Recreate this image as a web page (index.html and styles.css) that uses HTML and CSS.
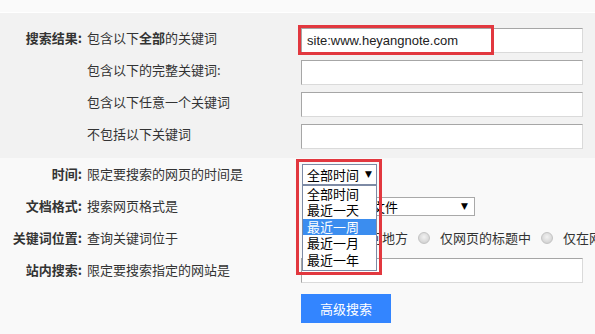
FILE: index.html
```html
<!DOCTYPE html>
<html lang="zh-CN">
<head>
<meta charset="utf-8">
<link rel="stylesheet" href="styles.css">
</head>
<body>
<div class="topbar"></div>
<section class="group group-words">
  <div class="row">
    <div class="label">搜索结果:</div>
    <div class="desc">包含以下<b>全部</b>的关键词</div>
    <div class="control"><div class="input">site:www.heyangnote.com</div></div>
  </div>
  <div class="row">
    <div class="label"></div>
    <div class="desc">包含以下的完整关键词:</div>
    <div class="control"><div class="input"></div></div>
  </div>
  <div class="row">
    <div class="label"></div>
    <div class="desc">包含以下任意一个关键词</div>
    <div class="control"><div class="input"></div></div>
  </div>
  <div class="row">
    <div class="label"></div>
    <div class="desc">不包括以下关键词</div>
    <div class="control"><div class="input"></div></div>
  </div>
</section>
<section class="group group-filters">
  <div class="row">
    <div class="label">时间:</div>
    <div class="desc">限定要搜索的网页的时间是</div>
    <div class="control">
      <div class="select select-time">
        <span>全部时间</span><span class="arrow">▼</span>
        <ul class="dropdown">
          <li>全部时间</li>
          <li>最近一天</li>
          <li class="active">最近一周</li>
          <li>最近一月</li>
          <li>最近一年</li>
        </ul>
      </div>
    </div>
  </div>
  <div class="row">
    <div class="label">文档格式:</div>
    <div class="desc">搜索网页格式是</div>
    <div class="control">
      <div class="select select-format"><span>所有网页和文件</span><span class="arrow">▼</span></div>
    </div>
  </div>
  <div class="row">
    <div class="label">关键词位置:</div>
    <div class="desc">查询关键词位于</div>
    <div class="control radios">
      <label class="radio first"><span class="dot"></span>网页的任何地方</label>
      <label class="radio"><span class="dot"></span>仅网页的标题中</label>
      <label class="radio"><span class="dot"></span>仅在网页的URL中</label>
    </div>
  </div>
  <div class="row">
    <div class="label">站内搜索:</div>
    <div class="desc">限定要搜索指定的网站是</div>
    <div class="control"><div class="input"></div></div>
  </div>
  <div class="actions">
    <button class="btn">高级搜索</button>
  </div>
</section>
<div class="mark mark-input"></div>
<div class="mark mark-time"></div>
</body>
</html>
```

FILE: styles.css
```css
* { box-sizing: border-box; }
html, body {
  margin: 0;
  padding: 0;
  width: 595px;
  height: 334px;
  overflow: hidden;
  background: #f9f9f9;
  font-family: "Liberation Sans", "Noto Sans CJK SC", sans-serif;
  font-size: 13px;
  color: #333;
}
.topbar {
  height: 13px;
  background: #fafafa;
  border-bottom: 1px solid #ffffff;
}
.group-words {
  background: #f2f2f2;
  padding: 11px 0 6px;
}
.group-filters {
  background: #f9f9f9;
  padding: 0;
}
.row {
  display: grid;
  grid-template-columns: 82px 209px 282px;
  column-gap: 5px;
  height: 32px;
  align-items: center;
  white-space: nowrap;
}
.control {
  min-width: 0;
  overflow: visible;
}
.group-words .label,
.group-words .desc {
  padding-bottom: 4px;
}
.label {
  text-align: right;
  font-weight: bold;
  font-family: "Noto Sans CJK SC", sans-serif;
  line-height: 16px;
}
.desc {
  font-family: "Noto Sans CJK SC", sans-serif;
  line-height: 16px;
}
.desc b { font-weight: bold; }
.input {
  height: 25px;
  width: 282px;
  background: #fff;
  border: 1px solid;
  border-color: #a6a6a6 #dadada #dadada #a6a6a6;
  padding: 0 5px;
  line-height: 23px;
  font-size: 13px;
  color: #222;
  font-family: "Liberation Sans", sans-serif;
}
.select {
  position: relative;
  margin-left: 1px;
  background: #fff;
  border: 1px solid #7d8aa5;
  display: flex;
  align-items: center;
  justify-content: space-between;
  padding: 0 4px 0 4px;
  font-family: "Noto Sans CJK SC", sans-serif;
  color: #000;
}
.select .arrow {
  font-size: 9px;
  font-family: "DejaVu Sans", sans-serif;
}
.select-time {
  width: 75px;
  height: 21px;
  line-height: 19px;
}
.select-format {
  width: 173px;
  height: 19px;
  line-height: 17px;
  border-color: #a9a9a9;
  padding-right: 6px;
}
.dropdown {
  position: absolute;
  top: 20px;
  left: -1px;
  width: 75px;
  margin: 0;
  padding: 0 0 2px;
  list-style: none;
  background: #fff;
  border: 1px solid #7d8aa5;
  z-index: 2;
}
.dropdown li {
  height: 16.6px;
  line-height: 16px;
  padding-left: 4px;
  color: #000;
}
.dropdown li.active {
  background: #3b8def;
  color: #fff;
}
.radios {
  display: flex;
  align-items: center;
  font-family: "Noto Sans CJK SC", sans-serif;
  line-height: 16px;
  padding-left: 1px;
}
.radio {
  display: flex;
  align-items: center;
  margin-left: 10px;
  flex: none;
}
.radio.first { margin-left: 0; }
.dot {
  width: 12px;
  height: 12px;
  border-radius: 50%;
  border: 1px solid #c4c4c4;
  background: radial-gradient(circle at 50% 40%, #f2f2f2 0%, #dcdcdc 55%, #c8c8c8 100%);
  margin-right: 10px;
  flex: none;
}
.radio.first .dot { margin-right: 3px; }
.actions {
  padding: 8px 0 0 301px;
}
.btn {
  width: 90px;
  height: 29px;
  border: none;
  background: #3385ff;
  color: #fff;
  font-family: "Noto Sans CJK SC", sans-serif;
  font-size: 13px;
  padding: 0;
  margin: 0;
}
.mark {
  position: absolute;
  border: 3px solid #e2383f;
  z-index: 5;
}
.mark-input {
  left: 298px;
  top: 25px;
  width: 196px;
  height: 30px;
}
.mark-time {
  left: 296px;
  top: 159px;
  width: 86px;
  height: 116px;
}
```
